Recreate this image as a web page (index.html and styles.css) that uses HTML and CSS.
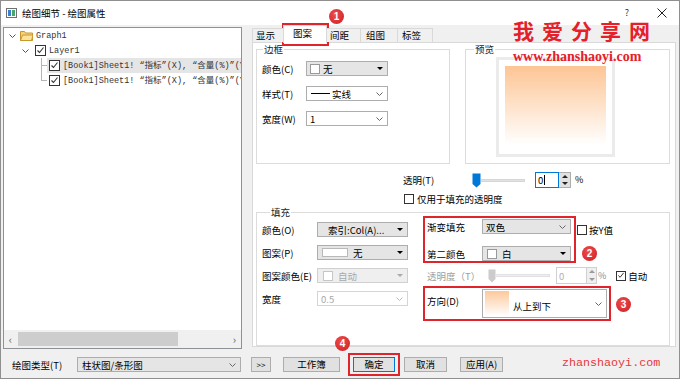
FILE: index.html
```html
<!DOCTYPE html>
<html lang="zh">
<head>
  <meta charset="UTF-8" />
  <title>绘图细节 - 绘图属性</title>
  <link rel="stylesheet" href="styles.css">
</head>
<body>
  <div class="win">
    <div class="titlebar">
      <svg class="app-icon" width="11" height="10" viewBox="0 0 11 10"><rect x="0.5" y="0.5" width="10" height="9" fill="#fff" stroke="#707070"/><rect x="2" y="2" width="3" height="6" fill="#3b7fd0"/><rect x="6" y="2" width="3" height="6" fill="#45a86a"/></svg>
      <span class="title">绘图细节 - 绘图属性</span>
      <span class="help">?</span>
      <svg class="close" width="10" height="10" viewBox="0 0 10 10"><path d="M0.5 0.5L9.5 9.5M9.5 0.5L0.5 9.5" stroke="#222" stroke-width="1"/></svg>
    </div>

    <div class="main">
      <!-- tree -->
      <div class="tree">
        <div class="tree-body">
          <div class="node n0">
            <svg class="chev" width="7" height="4" viewBox="0 0 7 4"><polyline points="0.5,0.5 3.5,3.5 6.5,0.5" fill="none" stroke="#555"/></svg>
            <svg class="folder" width="13" height="11" viewBox="0 0 13 11"><path d="M0.5 1.5h4l1 1.5h7v7.5h-12z" fill="#f6d37a" stroke="#c9962e"/><path d="M0.5 10.5l2-5.5h10.5l-1.5 5.5z" fill="#fbe39c" stroke="#c9962e"/></svg>
            <span class="mono">Graph1</span>
          </div>
          <div class="node n1">
            <svg class="chev" width="7" height="4" viewBox="0 0 7 4"><polyline points="0.5,0.5 3.5,3.5 6.5,0.5" fill="none" stroke="#555"/></svg>
            <span class="cb on"><svg width="9" height="9" viewBox="0 0 9 9"><polyline points="1.5,4.5 3.5,6.5 7.5,1.5" fill="none" stroke="#333" stroke-width="1.1"/></svg></span>
            <span class="mono">Layer1</span>
          </div>
          <div class="node n2">
            <span class="ln tee"></span>
            <div class="pick sel">
              <span class="cb on"><svg width="9" height="9" viewBox="0 0 9 9"><polyline points="1.5,4.5 3.5,6.5 7.5,1.5" fill="none" stroke="#333" stroke-width="1.1"/></svg></span>
              <span class="mono">[Book1]Sheet1! “指标”(X), “含量(%)”(Y)</span>
            </div>
          </div>
          <div class="node n2">
            <span class="ln end"></span>
            <div class="pick">
              <span class="cb on"><svg width="9" height="9" viewBox="0 0 9 9"><polyline points="1.5,4.5 3.5,6.5 7.5,1.5" fill="none" stroke="#333" stroke-width="1.1"/></svg></span>
              <span class="mono">[Book1]Sheet1! “指标”(X), “含量(%)”(Y)</span>
            </div>
          </div>
        </div>
        <div class="hscroll">
          <span class="sarrow">‹</span>
          <div class="strack"><div class="sthumb"></div></div>
          <span class="sarrow">›</span>
        </div>
      </div>

      <!-- tabs -->
      <div class="tabbox">
        <div class="tabstrip">
          <span class="tab t1">显示</span>
          <span class="tab t2 active">图案</span>
          <span class="tab t3">间距</span>
          <span class="tab t4">组图</span>
          <span class="tab t5">标签</span>
        </div>
        <div class="page">
          <div class="top-groups">
            <div class="group border-group">
              <span class="legend">边框</span>
              <div class="frow">
                <span class="lbl">颜色(C)</span>
                <div class="dd gray"><span class="sw"></span><span class="dd-text">无</span><span class="tri"></span></div>
              </div>
              <div class="frow">
                <span class="lbl">样式(T)</span>
                <div class="dd white"><span class="dash"></span><span class="dd-text">实线</span><svg class="chev2" width="7" height="4" viewBox="0 0 7 4"><polyline points="0.5,0.5 3.5,3.5 6.5,0.5" fill="none" stroke="#666"/></svg></div>
              </div>
              <div class="frow">
                <span class="lbl">宽度(W)</span>
                <div class="dd white"><span class="dd-text">1</span><svg class="chev2" width="7" height="4" viewBox="0 0 7 4"><polyline points="0.5,0.5 3.5,3.5 6.5,0.5" fill="none" stroke="#666"/></svg></div>
              </div>
            </div>
            <div class="group preview-group">
              <span class="legend">预览</span>
              <div class="pv-frame"><div class="pv-fill"></div></div>
            </div>
          </div>

          <div class="trans-row">
            <span class="trans-lbl">透明(T)</span>
            <div class="slider">
              <svg width="9" height="15" viewBox="0 0 9 15"><polygon points="0.5,0.5 8.5,0.5 8.5,11 4.5,14.5 0.5,11" fill="#0078d7"/></svg>
              <span class="track"></span>
            </div>
            <div class="num focus"><span>0</span><span class="caret"></span></div>
            <div class="spin"><span class="up"></span><span class="down"></span></div>
            <span class="pct">%</span>
          </div>

          <div class="check-row">
            <span class="cb"></span>
            <span>仅用于填充的透明度</span>
          </div>

          <div class="group fill-group">
            <span class="legend">填充</span>
            <div class="fill-left">
              <div class="frow">
                <span class="lbl">颜色(O)</span>
                <div class="dd gray"><span class="dd-text idx">索引:Col(A)...</span><span class="tri"></span></div>
              </div>
              <div class="frow">
                <span class="lbl">图案(P)</span>
                <div class="dd gray"><span class="sw wide"></span><span class="dd-text">无</span><span class="tri"></span></div>
              </div>
              <div class="frow">
                <span class="lbl">图案颜色(E)</span>
                <div class="dd off"><span class="sw dim"></span><span class="dd-text">自动</span><span class="tri dim"></span></div>
              </div>
              <div class="frow">
                <span class="lbl">宽度</span>
                <div class="dd white off-w"><span class="dd-text">0.5</span><svg class="chev2" width="7" height="4" viewBox="0 0 7 4"><polyline points="0.5,0.5 3.5,3.5 6.5,0.5" fill="none" stroke="#bbb"/></svg></div>
              </div>
            </div>

            <div class="fill-right">
              <div class="grad-line">
                <div class="mark mark-grad">
                  <div class="grow">
                    <span class="lbl">渐变填充</span>
                    <div class="dd gray"><span class="dd-text">双色</span><svg class="chev2" width="7" height="4" viewBox="0 0 7 4"><polyline points="0.5,0.5 3.5,3.5 6.5,0.5" fill="none" stroke="#666"/></svg></div>
                  </div>
                  <div class="grow second">
                    <span class="lbl">第二颜色</span>
                    <div class="dd gray"><span class="sw sq"></span><span class="dd-text">白</span><span class="tri"></span></div>
                  </div>
                </div>
                <div class="yval"><span class="cb"></span><span>按Y值</span></div>
              </div>

              <div class="trans2">
                <span class="lbl">透明度（T）</span>
                <div class="slider wide">
                  <svg width="8" height="14" viewBox="0 0 8 14"><polygon points="0.5,0.5 7.5,0.5 7.5,10 4,13.5 0.5,10" fill="#cccccc"/></svg>
                  <span class="track"></span>
                </div>
                <div class="num dim"><span>0</span></div>
                <div class="spin dim"><span class="up"></span><span class="down"></span></div>
                <span class="pct">%</span>
                <span class="auto"><span class="cb on"><svg width="9" height="9" viewBox="0 0 9 9"><polyline points="1.5,4.5 3.5,6.5 7.5,1.5" fill="none" stroke="#333" stroke-width="1.1"/></svg></span><span>自动</span></span>
              </div>

              <div class="mark mark-dir">
                <span class="lbl">方向(D)</span>
                <div class="dd white tall"><span class="dir-sw"></span><span class="dd-text">从上到下</span><svg class="chev2" width="7" height="4" viewBox="0 0 7 4"><polyline points="0.5,0.5 3.5,3.5 6.5,0.5" fill="none" stroke="#666"/></svg></div>
              </div>
            </div>
          </div>
        </div>
      </div>
    </div>

    <div class="footer">
      <span class="ftl">绘图类型(T)</span>
      <div class="dd gray ftype"><span class="dd-text">柱状图/条形图</span><svg class="chev2" width="7" height="4" viewBox="0 0 7 4"><polyline points="0.5,0.5 3.5,3.5 6.5,0.5" fill="none" stroke="#666"/></svg></div>
      <button class="btn more">&gt;&gt;</button>
      <button class="btn book">工作簿</button>
      <button class="btn ok">确定</button>
      <button class="btn cancel">取消</button>
      <button class="btn apply">应用(A)</button>
    </div>

    <!-- annotations -->
    <span class="redbox tab-box"></span>
    <span class="redbox ok-box"></span>
    <span class="badge b1">1</span>
    <span class="badge b2">2</span>
    <span class="badge b3">3</span>
    <span class="badge b4">4</span>
    <span class="wm-big">我爱分享网</span>
    <span class="wm-url">www.zhanshaoyi.com</span>
    <span class="wm-foot">zhanshaoyi.com</span>
  </div>
</body>
</html>
```

FILE: styles.css
```css
* {
  box-sizing: border-box;
}

body {
  margin: 0;
  background: #fff;
}

.win {
  position: relative;
  width: 680px;
  height: 379px;
  border: 1px solid #8f8f8f;
  background: #f0f0f0;
  font-family: "Noto Sans CJK SC", "Microsoft YaHei", sans-serif;
  font-size: 9.5px;
  line-height: 12px;
  color: #000;
  overflow: hidden;
}

/* title bar */
.titlebar {
  display: flex;
  align-items: center;
  height: 24px;
  background: #fff;
  padding-left: 5px;
}

.app-icon { margin-right: 5px; }
.title { flex: 1; }
.help { margin-right: 28px; font-size: 9px; color: #333; }
.close { margin-right: 12px; }

.main {
  display: flex;
  padding: 2px 3px 0 2px;
}

/* tree */
.tree {
  width: 239px;
  height: 322px;
  border: 1px solid #8e9297;
  background: #fff;
  display: flex;
  flex-direction: column;
}

.tree-body { flex: 1; }

.node {
  display: flex;
  align-items: center;
  height: 15px;
  white-space: nowrap;
  overflow: hidden;
}

.n0 { padding-left: 5px; }
.n0 .chev { margin-right: 4px; }
.n0 .folder { margin-right: 3px; }
.n1 { padding-left: 18px; }
.n1 .chev { margin-right: 6px; }
.n1 .cb { margin-right: 3px; }
.n2 { padding-left: 37px; }

.mono {
  font-family: "Liberation Mono", "Noto Sans CJK SC", monospace;
  font-size: 8.5px;
  color: #333;
}

.ln {
  width: 6px;
  height: 15px;
  flex: none;
}

.ln.tee {
  background: linear-gradient(#b5b5b5, #b5b5b5) 0 0 / 1px 100% no-repeat,
              linear-gradient(#b5b5b5, #b5b5b5) 0 7px / 6px 1px no-repeat;
}

.ln.end {
  background: linear-gradient(#b5b5b5, #b5b5b5) 0 0 / 1px 8px no-repeat,
              linear-gradient(#b5b5b5, #b5b5b5) 0 7px / 6px 1px no-repeat;
}

.pick {
  display: flex;
  align-items: center;
  height: 15px;
  flex: 1;
  min-width: 0;
  overflow: hidden;
  padding-left: 2px;
}

.pick .cb { margin-right: 3px; }
.pick.sel { background: #e5e5e5; }

.cb {
  width: 11px;
  height: 11px;
  border: 1px solid #333;
  background: #fff;
  display: inline-flex;
  align-items: center;
  justify-content: center;
  flex: none;
}

.hscroll {
  display: flex;
  align-items: center;
  height: 18px;
  background: #f0f0f0;
}

.sarrow {
  width: 13px;
  text-align: center;
  font-size: 11px;
  color: #606060;
}

.strack { flex: 1; height: 100%; padding: 2px 0; display: flex; }
.sthumb { width: 160px; margin-left: 1px; background: #cdcdcd; }

/* tabs */
.tabbox {
  margin-left: 10px;
  width: 424px;
}

.tabstrip {
  display: flex;
  height: 15px;
  position: relative;
  z-index: 1;
}

.tab {
  margin-top: 1px;
  height: 14px;
  border: 1px solid #d9d9d9;
  border-bottom: none;
  background: #f0f0f0;
  line-height: 12px;
  margin-right: -1px;
}

.tab.active {
  margin-top: -2px;
  height: 18px;
  background: #fff;
  line-height: 14px;
}

.t1 { width: 32px; padding-left: 3px; }
.t2 { width: 44px; padding-left: 9px; }
.t3 { width: 35px; padding-left: 3px; }
.t4 { width: 38px; padding-left: 5px; }
.t5 { width: 36px; padding-left: 4px; }

.page {
  height: 305px;
  border: 1px solid #d9d9d9;
  background: #fff;
  padding-left: 3px;
}

.group {
  position: relative;
  border: 1px solid #dcdcdc;
}

.legend {
  position: absolute;
  top: -7px;
  left: 6px;
  background: #fff;
  padding: 0 1px;
  color: #222;
}

.top-groups {
  display: flex;
  gap: 15px;
  margin-top: 6px;
}

.border-group {
  width: 194px;
  height: 115px;
  padding: 11px 0 0 5px;
  display: flex;
  flex-direction: column;
  gap: 10px;
}

.frow {
  display: flex;
  align-items: center;
  height: 15px;
}

.border-group .lbl { width: 44px; }
.border-group .dd { width: 82px; }

.dd {
  display: flex;
  align-items: center;
  height: 15px;
  border: 1px solid #adadad;
  padding: 0 4px 0 3px;
  white-space: nowrap;
}

.dd.gray { background: #e5e5e5; }
.dd.white { background: #fff; }
.dd.off { background: #efefef; border-color: #d0d0d0; color: #a8a8a8; }
.dd.off-w { border-color: #d5d5d5; color: #a8a8a8; }
.dd-text { flex: 1; }

.tri {
  width: 0;
  height: 0;
  border-left: 3px solid transparent;
  border-right: 3px solid transparent;
  border-top: 3px solid #000;
}

.tri.dim { border-top-color: #aaa; }

.sw {
  width: 10px;
  height: 10px;
  border: 1px solid #999;
  background: #fff;
  margin-right: 3px;
}

.sw.wide { width: 26px; height: 9px; border-color: #b9b9b9; margin-right: 5px; margin-left: 1px; }
.sw.dim { border-color: #c6c6c6; margin-left: 2px; margin-right: 5px; }
.sw.sq { margin-left: 1px; margin-right: 5px; }

.dash {
  width: 19px;
  height: 1px;
  background: #000;
  margin: 0 2px 0 1px;
}

.preview-group {
  width: 205px;
  height: 115px;
}

.preview-group .legend { left: 8px; }

.pv-frame {
  width: 119px;
  height: 100px;
  margin: 7px 0 0 30px;
  border: 3px solid #ebebeb;
  padding: 6px;
}

.pv-fill {
  height: 82px;
  background: linear-gradient(#fdc594, #fff 96%);
}

/* transparency */
.trans-row {
  display: flex;
  align-items: center;
  height: 16px;
  margin-top: 8px;
  padding-left: 147px;
}

.trans-lbl { width: 69px; }

.slider {
  display: flex;
  align-items: center;
  width: 53px;
  margin-right: 10px;
}

.track {
  flex: 1;
  height: 3px;
  background: #e2e2e2;
  border: 1px solid #d6d6d6;
  border-left: none;
}

.num {
  width: 24px;
  height: 16px;
  border: 1px solid #0078d7;
  display: flex;
  align-items: center;
  padding-left: 2px;
}

.caret { width: 1px; height: 10px; background: #000; margin-left: 1px; }

.spin {
  width: 12px;
  height: 16px;
  border: 1px solid #adadad;
  border-left: none;
  background: #e1e1e1;
  display: flex;
  flex-direction: column;
  align-items: center;
  justify-content: space-around;
}

.spin .up {
  border-left: 3px solid transparent;
  border-right: 3px solid transparent;
  border-bottom: 3px solid #222;
}

.spin .down {
  border-left: 3px solid transparent;
  border-right: 3px solid transparent;
  border-top: 3px solid #222;
}

.pct { margin-left: 4px; font-size: 9px; }

.check-row {
  display: flex;
  align-items: center;
  gap: 3px;
  height: 12px;
  margin-top: 5px;
  padding-left: 148px;
}

.check-row .cb { width: 10px; height: 10px; }

/* fill */
.fill-group {
  width: 414px;
  height: 134px;
  margin-top: 7px;
  display: flex;
  align-items: flex-start;
}

.fill-group .legend { left: 13px; }

.fill-left {
  width: 166px;
  padding: 9px 0 0 5px;
  display: flex;
  flex-direction: column;
  gap: 8px;
}

.fill-left .lbl { width: 55px; }
.fill-left .dd { width: 91px; }
.idx { padding-left: 7px; }

.fill-right {
  padding-top: 3px;
}

.grad-line {
  display: flex;
  align-items: flex-start;
}

.mark {
  border: 2px solid #e0242b;
}

.mark-grad {
  width: 153px;
  height: 47px;
  padding: 1px 0 0 2px;
}

.grow {
  display: flex;
  align-items: center;
  height: 15px;
}

.grow.second { margin-top: 12px; }
.grow .lbl { width: 55px; }
.grow .dd { width: 89px; }

.yval {
  display: flex;
  align-items: center;
  gap: 2px;
  margin: 8px 0 0 1px;
}

.yval .cb, .auto .cb { width: 10px; height: 10px; }

.trans2 {
  display: flex;
  align-items: center;
  height: 17px;
  margin-top: 4px;
  padding-left: 4px;
  color: #a0a0a0;
}

.trans2 .lbl { width: 61px; }
.slider.wide { width: 62px; margin-right: 6px; }
.slider.wide .track { background: #eee; border-color: #e2e2e2; }
.num.dim { width: 31px; height: 17px; border-color: #d0d0d0; color: #b0b0b0; }
.spin.dim { width: 10px; height: 17px; border-color: #d0d0d0; background: #efefef; }
.spin.dim .up { border-bottom-color: #9a9a9a; }
.spin.dim .down { border-top-color: #9a9a9a; }
.trans2 .pct { margin-left: 1px; color: #888; }

.auto {
  display: flex;
  align-items: center;
  gap: 2px;
  margin-left: 10px;
  color: #000;
}

.mark-dir {
  width: 188px;
  height: 35px;
  margin-top: 2px;
  padding: 1px 0 0 2px;
  display: flex;
  align-items: flex-start;
}

.mark-dir .lbl { width: 55px; margin-top: 6px; }

.dd.tall {
  width: 125px;
  height: 29px;
  padding-left: 2px;
}

.dir-sw {
  width: 24px;
  height: 25px;
  background: linear-gradient(#fdc99b, #fff);
  margin-right: 4px;
}

.dd.tall .dd-text { padding-top: 5px; }

/* footer */
.footer {
  display: flex;
  align-items: center;
  padding: 8px 0 0 11px;
}

.ftl { width: 65px; }
.ftype { width: 164px; padding-left: 4px; }

.btn {
  height: 15px;
  border: 1px solid #adadad;
  background: #e1e1e1;
  font-family: inherit;
  font-size: 9.5px;
  line-height: 11px;
  padding: 0;
  color: #000;
}

.more { width: 20px; margin-left: 10px; font-size: 8px; }
.book { width: 57px; margin-left: 12px; }
.ok { width: 42px; margin-left: 13px; border-color: #0078d7; }
.cancel { width: 43px; margin-left: 9px; }
.apply { width: 43px; margin-left: 13px; }

/* annotations */
.redbox {
  position: absolute;
  border: 2px solid #e0242b;
}

.tab-box { left: 281px; top: 22px; width: 47px; height: 23px; }
.ok-box { left: 347px; top: 352px; width: 52px; height: 23px; }

.badge {
  position: absolute;
  width: 15px;
  height: 15px;
  border-radius: 50%;
  background: radial-gradient(circle at 40% 35%, #ef4a4a, #cc1f24);
  color: #fff;
  font-family: "Liberation Sans", sans-serif;
  font-weight: 700;
  font-size: 10px;
  line-height: 15px;
  text-align: center;
}

.b1 { left: 328px; top: 8px; }
.b2 { left: 581px; top: 245px; }
.b3 { left: 615px; top: 296px; }
.b4 { left: 334px; top: 335px; }

.wm-big {
  position: absolute;
  left: 512px;
  top: 19px;
  font-size: 21px;
  line-height: 21px;
  font-weight: 700;
  letter-spacing: 8px;
  color: #e5202a;
}

.wm-url {
  position: absolute;
  left: 512px;
  top: 49px;
  font-family: "Liberation Serif", serif;
  font-weight: 700;
  font-size: 14px;
  line-height: 14px;
  color: #e5202a;
}

.wm-foot {
  position: absolute;
  left: 561px;
  top: 355px;
  font-family: "Liberation Mono", monospace;
  font-size: 11.7px;
  line-height: 14px;
  color: #e5383d;
}
```
